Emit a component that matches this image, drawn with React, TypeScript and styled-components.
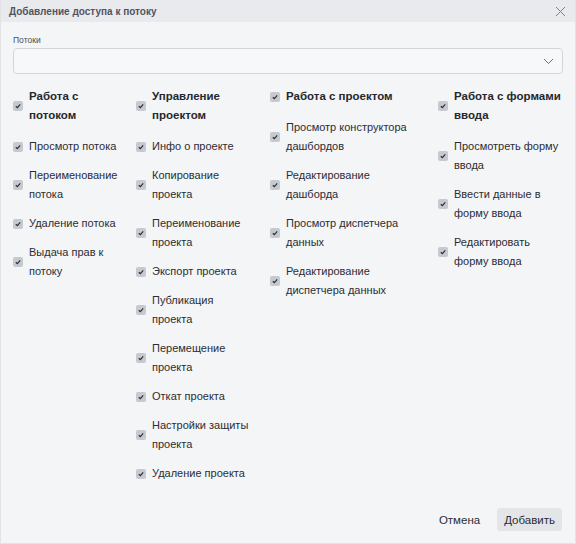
import styled, { createGlobalStyle } from 'styled-components';

const GlobalStyle = createGlobalStyle`
  html, body {
    margin: 0;
    padding: 0;
    background: #f4f5f7;
  }
  body {
    font-family: 'Liberation Sans', Arial, sans-serif;
    color: #2b2d33;
  }
`;

interface Group {
  title: string;
  items: string[];
}

const groups: Group[] = [
  {
    title: 'Работа с потоком',
    items: ['Просмотр потока', 'Переименование потока', 'Удаление потока', 'Выдача прав к потоку'],
  },
  {
    title: 'Управление проектом',
    items: [
      'Инфо о проекте',
      'Копирование проекта',
      'Переименование проекта',
      'Экспорт проекта',
      'Публикация проекта',
      'Перемещение проекта',
      'Откат проекта',
      'Настройки защиты проекта',
      'Удаление проекта',
    ],
  },
  {
    title: 'Работа с проектом',
    items: [
      'Просмотр конструктора дашбордов',
      'Редактирование дашборда',
      'Просмотр диспетчера данных',
      'Редактирование диспетчера данных',
    ],
  },
  {
    title: 'Работа с формами ввода',
    items: ['Просмотреть форму ввода', 'Ввести данные в форму ввода', 'Редактировать форму ввода'],
  },
];

// ширина текста в каждой колонке, чтобы переносы совпадали
const titleWidths = [88, 100, 125, 112];
const textWidths = [100, 100, 125, 106];

const Check = () => (
  <Box>
    <svg width="6" height="6" viewBox="0 0 6 6">
      <path d="M0.8 3.2 L2.4 4.7 L5.2 1.4" fill="none" stroke="#2e3036" strokeWidth="1.2" />
    </svg>
  </Box>
);

const App = () => {
  return (
    <Dialog>
      <GlobalStyle />
      <Header>
        <Title>Добавление доступа к потоку</Title>
        <CloseBtn>
          <svg width="11" height="11" viewBox="0 0 11 11">
            <path d="M1 1 L10 10 M10 1 L1 10" stroke="#7d818b" strokeWidth="1" />
          </svg>
        </CloseBtn>
      </Header>

      <Body>
        <Label>Потоки</Label>
        <Select>
          <svg width="11" height="7" viewBox="0 0 11 7">
            <path d="M1 1 L5.5 5.5 L10 1" fill="none" stroke="#6b6f78" strokeWidth="1" />
          </svg>
        </Select>

        <Columns>
          {groups.map((g, i) => (
            <Column key={g.title}>
              <Row>
                <Check />
                <GroupTitle textWidth={titleWidths[i]}>{g.title}</GroupTitle>
              </Row>
              <Items>
                {g.items.map((item) => (
                  <Row key={item}>
                    <Check />
                    <ItemText textWidth={textWidths[i]}>{item}</ItemText>
                  </Row>
                ))}
              </Items>
            </Column>
          ))}
        </Columns>
      </Body>

      <Footer>
        <TextButton>Отмена</TextButton>
        <PrimaryButton>Добавить</PrimaryButton>
      </Footer>
    </Dialog>
  );
};

export default App;

const Dialog = styled.div`
  box-sizing: border-box;
  width: 576px;
  height: 544px;
  display: flex;
  flex-direction: column;
  background: #f4f5f7;
  border: 1px solid #e2e3e6;
  border-top: none;
`;

const Header = styled.div`
  height: 22px;
  display: flex;
  align-items: center;
  justify-content: space-between;
  padding: 0 8px 0 8px;
  background: #e9eaed;
`;

const Title = styled.div`
  font-size: 10px;
  font-weight: 700;
  color: #50545f;
`;

const CloseBtn = styled.div`
  display: flex;
  align-items: center;
  justify-content: center;
  width: 13px;
  height: 13px;
`;

const Body = styled.div`
  display: flex;
  flex-direction: column;
  padding: 13px 12px 0 12px;
`;

const Label = styled.div`
  font-size: 8.5px;
  line-height: 11px;
  color: #4a4d55;
  margin-bottom: 2px;
`;

const Select = styled.div`
  box-sizing: border-box;
  height: 26px;
  display: flex;
  align-items: center;
  justify-content: flex-end;
  padding-right: 8px;
  border: 1px solid #d3d5da;
  border-radius: 4px;
  background: #f7f8f9;
`;

const Columns = styled.div`
  display: grid;
  grid-template-columns: 123px 134px 168px 1fr;
  margin-top: 13px;
`;

const Column = styled.div`
  display: flex;
  flex-direction: column;
  gap: 12px;
`;

const Items = styled.div`
  display: flex;
  flex-direction: column;
  gap: 10px;
`;

const Row = styled.div`
  display: flex;
  align-items: center;
  gap: 6px;
`;

const Box = styled.span`
  flex: none;
  width: 10px;
  height: 10px;
  border-radius: 2px;
  background: #c6c9cf;
  display: flex;
  align-items: center;
  justify-content: center;
`;

const GroupTitle = styled.div<{ textWidth: number }>`
  max-width: ${({ textWidth }) => textWidth}px;
  font-size: 11.5px;
  font-weight: 700;
  line-height: 19px;
  color: #26282d;
`;

const ItemText = styled.div<{ textWidth: number }>`
  max-width: ${({ textWidth }) => textWidth}px;
  font-size: 11px;
  line-height: 19px;
  color: #2b2d33;
`;

const Footer = styled.div`
  margin-top: auto;
  display: flex;
  justify-content: flex-end;
  align-items: center;
  gap: 9px;
  padding: 0 13px 12px 0;
`;

const TextButton = styled.button`
  border: none;
  background: transparent;
  font-family: inherit;
  font-size: 11.5px;
  color: #2b2d33;
  height: 23px;
  padding: 0 8px;
`;

const PrimaryButton = styled.button`
  border: none;
  border-radius: 3px;
  background: #e3e5e8;
  font-family: inherit;
  font-size: 11.5px;
  color: #2b2d33;
  height: 23px;
  padding: 0 7px;
`;
